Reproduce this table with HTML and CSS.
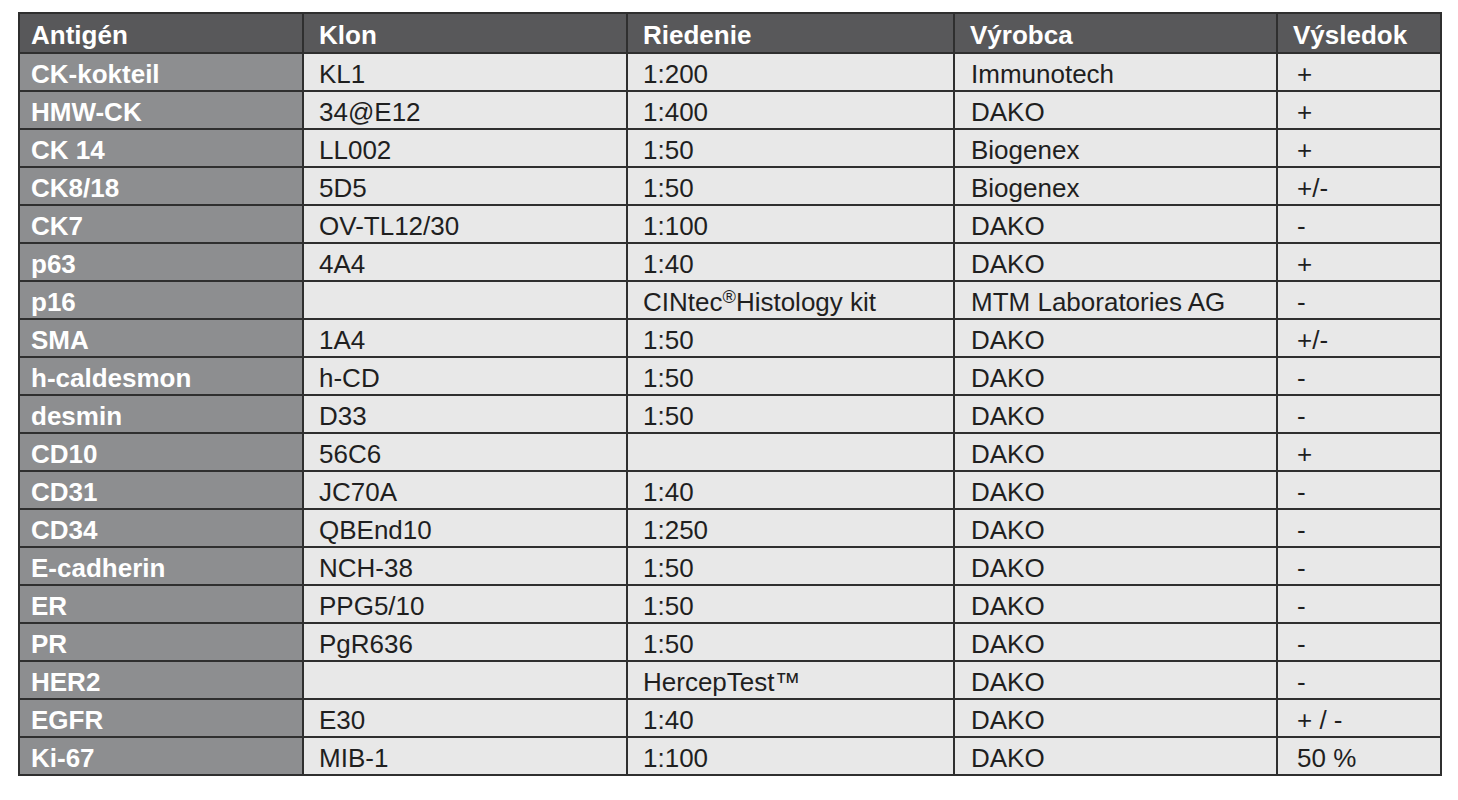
FILE: index.html
```html
<!DOCTYPE html>
<html lang="sk">
<head>
<meta charset="utf-8">
<title>Antigény</title>
<link rel="stylesheet" href="styles.css">
</head>
<body>
<table class="tbl">
  <colgroup>
    <col class="c1"><col class="c2"><col class="c3"><col class="c4"><col class="c5">
  </colgroup>
  <thead>
    <tr><th>Antigén</th><th>Klon</th><th>Riedenie</th><th>Výrobca</th><th>Výsledok</th></tr>
  </thead>
  <tbody>
    <tr><th>CK-kokteil</th><td>KL1</td><td>1:200</td><td>Immunotech</td><td>+</td></tr>
    <tr><th>HMW-CK</th><td>34@E12</td><td>1:400</td><td>DAKO</td><td>+</td></tr>
    <tr><th>CK 14</th><td>LL002</td><td>1:50</td><td>Biogenex</td><td>+</td></tr>
    <tr><th>CK8/18</th><td>5D5</td><td>1:50</td><td>Biogenex</td><td>+/-</td></tr>
    <tr><th>CK7</th><td>OV-TL12/30</td><td>1:100</td><td>DAKO</td><td>-</td></tr>
    <tr><th>p63</th><td>4A4</td><td>1:40</td><td>DAKO</td><td>+</td></tr>
    <tr><th>p16</th><td></td><td>CINtec<sup class="mark">®</sup>Histology kit</td><td>MTM Laboratories AG</td><td>-</td></tr>
    <tr><th>SMA</th><td>1A4</td><td>1:50</td><td>DAKO</td><td>+/-</td></tr>
    <tr><th>h-caldesmon</th><td>h-CD</td><td>1:50</td><td>DAKO</td><td>-</td></tr>
    <tr><th>desmin</th><td>D33</td><td>1:50</td><td>DAKO</td><td>-</td></tr>
    <tr><th>CD10</th><td>56C6</td><td></td><td>DAKO</td><td>+</td></tr>
    <tr><th>CD31</th><td>JC70A</td><td>1:40</td><td>DAKO</td><td>-</td></tr>
    <tr><th>CD34</th><td>QBEnd10</td><td>1:250</td><td>DAKO</td><td>-</td></tr>
    <tr><th>E-cadherin</th><td>NCH-38</td><td>1:50</td><td>DAKO</td><td>-</td></tr>
    <tr><th>ER</th><td>PPG5/10</td><td>1:50</td><td>DAKO</td><td>-</td></tr>
    <tr><th>PR</th><td>PgR636</td><td>1:50</td><td>DAKO</td><td>-</td></tr>
    <tr><th>HER2</th><td></td><td>HercepTest™</td><td>DAKO</td><td>-</td></tr>
    <tr><th>EGFR</th><td>E30</td><td>1:40</td><td>DAKO</td><td>+ / -</td></tr>
    <tr><th>Ki-67</th><td>MIB-1</td><td>1:100</td><td>DAKO</td><td>50 %</td></tr>
  </tbody>
</table>
</body>
</html>
```
FILE: styles.css
```css
html, body {
  margin: 0;
  padding: 0;
  background: #ffffff;
}
body {
  padding: 12px 0 0 18px;
  font-family: "Liberation Sans", Arial, sans-serif;
}
.tbl {
  border-collapse: collapse;
  table-layout: fixed;
  width: 1422px;
  font-size: 26px;
  color: #1f1f1f;
}
.c1 { width: 284px; }
.c2 { width: 324px; }
.c3 { width: 327px; }
.c4 { width: 323px; }
.c5 { width: 164px; }
.tbl th,
.tbl td {
  border: 2px solid #2f2f2f;
  padding: 0 0 0 15px;
  text-align: left;
  white-space: nowrap;
  overflow: hidden;
  line-height: 1;
}
.tbl thead th {
  background: #58585a;
  color: #ffffff;
  font-weight: bold;
  height: 35px;
  padding-top: 3px;
  vertical-align: middle;
}
.tbl thead th:first-child { padding-left: 11px; }
.tbl tbody tr { height: 38px; }
.tbl tbody th {
  background: #8d8e90;
  color: #ffffff;
  font-weight: bold;
  padding-left: 11px;
  padding-top: 3px;
}
.tbl tbody td {
  background: #e8e8e8;
  padding-top: 3px;
}
.tbl td:nth-child(4) { padding-left: 16px; }
.tbl td:nth-child(5) { padding-left: 19px; }
.mark {
  font-size: 0.7em;
  vertical-align: 0.45em;
  line-height: 0;
}
```
